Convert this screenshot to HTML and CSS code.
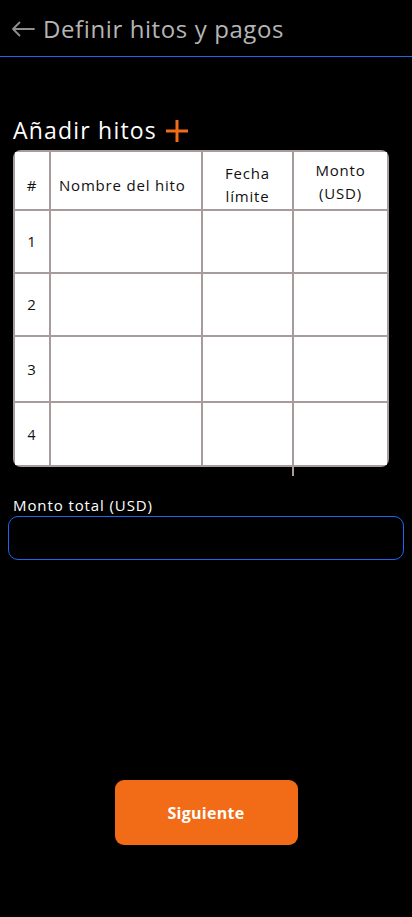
FILE: index.html
```html
<!DOCTYPE html>
<html lang="es">
<head>
<meta charset="utf-8">
<meta name="viewport" content="width=device-width, initial-scale=1">
<title>Definir hitos y pagos</title>
<link rel="stylesheet" href="styles.css">
</head>
<body>
<header class="topbar">
  <svg class="back" width="24" height="16" viewBox="0 0 24 16" aria-hidden="true">
    <path d="M23 8H2M8.5 1.5L2 8l6.5 6.5" fill="none" stroke="#8f8f8f" stroke-width="1.8" stroke-linecap="round" stroke-linejoin="round"/>
  </svg>
  <h1 class="title">Definir hitos y pagos</h1>
</header>
<main class="content">
  <div class="section-head">
    <h2 class="section-title">Añadir hitos</h2>
    <svg class="plus" width="24" height="24" viewBox="0 0 24 24" aria-hidden="true">
      <path d="M12 1v22M1 12h22" stroke="#f26b16" stroke-width="3"/>
    </svg>
  </div>
  <div class="table-wrap">
    <div class="grid">
      <div class="cell head">#</div>
      <div class="cell head left">Nombre del hito</div>
      <div class="cell head">Fecha<br>límite</div>
      <div class="cell head up">Monto<br>(USD)</div>
      <div class="cell num">1</div><div class="cell"></div><div class="cell"></div><div class="cell"></div>
      <div class="cell num">2</div><div class="cell"></div><div class="cell"></div><div class="cell"></div>
      <div class="cell num">3</div><div class="cell"></div><div class="cell"></div><div class="cell"></div>
      <div class="cell num small">4</div><div class="cell"></div><div class="cell"></div><div class="cell"></div>
    </div>
  </div>
  <label class="field-label" for="total">Monto total (USD)</label>
  <input class="field" id="total" type="text">
  <div class="actions">
    <button class="btn" type="button">Siguiente</button>
  </div>
</main>
</body>
</html>
```
FILE: styles.css
```css
* { box-sizing: border-box; }
html, body { margin: 0; padding: 0; background: #000; }
body {
  font-family: "Open Sans", "Noto Sans", sans-serif;
  color: #fff;
  width: 412px;
  min-height: 917px;
}
.topbar {
  height: 57px;
  display: flex;
  align-items: center;
  padding: 1px 0 0 11px;
  border-bottom: 1px solid #1e66f0;
}
.back { flex: none; margin-top: 1px; }
.title {
  margin: 0 0 0 8px;
  font-size: 24px;
  font-weight: 400;
  color: #b5b5b5;
  letter-spacing: 0.6px;
}
.content { padding: 0 8px; }
.section-head {
  display: flex;
  align-items: center;
  margin: 56px 0 0 5px;
  height: 37px;
  padding-bottom: 3px;
}
.section-title {
  margin: 0;
  font-size: 23px;
  font-weight: 400;
  color: #fff;
  letter-spacing: 1.2px;
}
.plus { margin-left: 8px; margin-top: 2px; }
.table-wrap {
  position: relative;
  margin: 0 0 0 5px;
  width: 376px;
}
.table-wrap::after {
  content: "";
  position: absolute;
  left: 279px;
  top: 316px;
  width: 2px;
  height: 10px;
  background: #a89b9b;
}
.grid {
  display: grid;
  grid-template-columns: 34px 150px 89px 93px;
  grid-template-rows: 57px 61px 61px 64px 62px;
  gap: 2px;
  padding: 2px;
  background: #a89b9b;
  border-radius: 8px;
  overflow: hidden;
}
.cell {
  background: #fff;
  color: #111;
  font-size: 15px;
  letter-spacing: 0.8px;
  display: flex;
  align-items: center;
  justify-content: center;
  text-align: center;
  line-height: 23px;
}
.cell.left { justify-content: flex-start; padding-left: 8px; }
.cell.head { padding-top: 9px; }
.cell.head.up { align-items: flex-start; padding-top: 7px; }
.cell.small { font-size: 14px; }
.field-label {
  display: block;
  margin: 28px 0 0 5px;
  font-size: 15px;
  letter-spacing: 0.9px;
  color: #fff;
  line-height: 20px;
}
.field {
  display: block;
  width: 396px;
  height: 44px;
  margin-top: 1px;
  background: #000;
  border: 1px solid #1e66f0;
  border-radius: 10px;
  color: #fff;
  font: inherit;
  padding: 0 12px;
  outline: none;
}
.actions {
  display: flex;
  justify-content: center;
  margin-top: 220px;
}
.btn {
  width: 183px;
  height: 65px;
  background: #f26b16;
  border: 0;
  border-radius: 9px;
  color: #fff;
  font-family: inherit;
  font-size: 16px;
  font-weight: 700;
  letter-spacing: 0.3px;
}
```
